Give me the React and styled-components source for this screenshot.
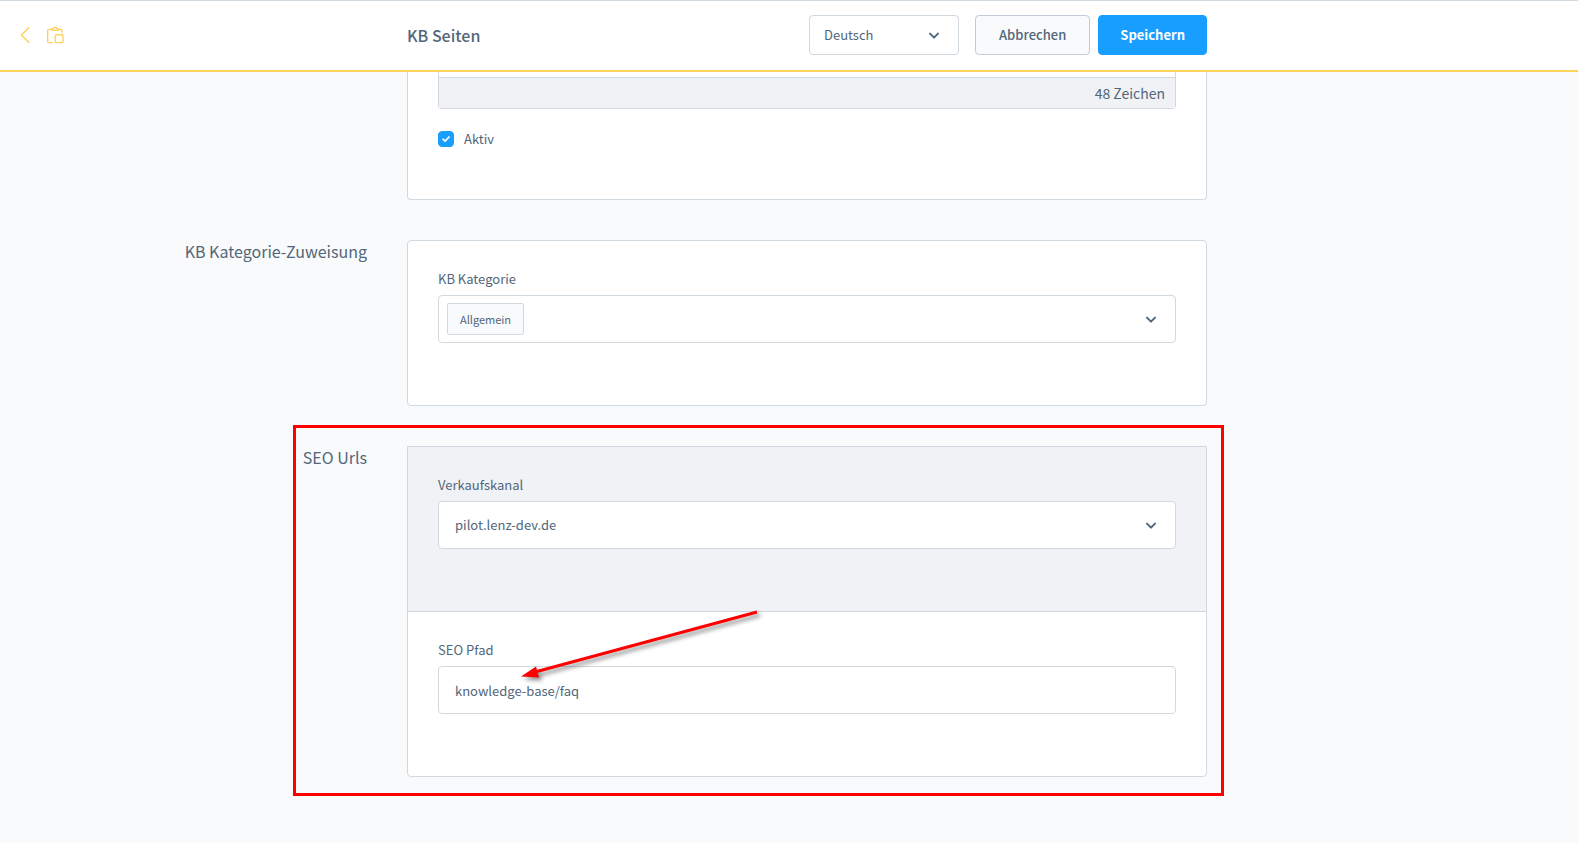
import React, { useState } from "react";
import styled, { createGlobalStyle, ThemeProvider } from "styled-components";

const theme = {
    text: "#52667a",
    border: "#d1d9e0",
    pageBg: "#f9fafb",
    mutedBg: "#f0f2f5",
    primary: "#189eff",
    accent: "#ffd15d",
    mark: "#ff0000",
};

const GlobalStyle = createGlobalStyle`
    * {
        box-sizing: border-box;
    }
    body {
        margin: 0;
        background: ${theme.pageBg};
        color: ${theme.text};
        font-family: "Source Sans Pro", "Noto Sans CJK SC", sans-serif;
        font-size: 13px;
        line-height: 16px;
    }
    button, input, select {
        font: inherit;
        color: inherit;
    }
`;

const Columns = styled.div`
    display: grid;
    grid-template-columns: 1fr minmax(0, 800px) 1fr;
    padding-left: 36px;
`;

const Header = styled.header`
    display: grid;
    grid-template-columns: 1fr minmax(0, 800px) 1fr;
    align-items: center;
    height: 72px;
    padding: 0 0 1px 36px;
    background: #fff;
    border-top: 1px solid ${(props) => props.theme.border};
    border-bottom: 2px solid ${(props) => props.theme.accent};
`;

const HeaderNav = styled.nav`
    display: flex;
    align-items: center;
    gap: 16px;
    margin-left: -16px;
    color: ${(props) => props.theme.accent};

    a {
        display: flex;
        color: inherit;
    }
`;

const HeaderContent = styled.div`
    display: flex;
    align-items: center;
    justify-content: space-between;
`;

const Title = styled.h1`
    margin: 0;
    font-size: 16px;
    font-weight: 500;
    line-height: 24px;
`;

const Actions = styled.div`
    display: flex;
    gap: 8px;
`;

const Button = styled.button`
    height: 40px;
    padding: 0 ${(props) => (props.$primary ? "21px" : "23px")};
    border: 1px solid ${(props) => (props.$primary ? props.theme.primary : "#c3ccd6")};
    border-radius: 4px;
    background: ${(props) => (props.$primary ? props.theme.primary : props.theme.pageBg)};
    color: ${(props) => (props.$primary ? "#fff" : props.theme.text)};
    font-weight: ${(props) => (props.$primary ? 700 : 500)};
    cursor: pointer;
`;

const SelectBox = styled.div`
    display: flex;
    align-items: center;
    position: relative;
    height: ${(props) => (props.$small ? "40px" : "48px")};
    width: ${(props) => (props.$small ? "150px" : "100%")};
    margin-right: ${(props) => (props.$small ? "8px" : "0")};
    padding-left: ${(props) => (props.$tags ? "8px" : "0")};
    border: 1px solid ${(props) => props.theme.border};
    border-radius: 4px;
    background: #fff;

    select {
        flex: 1;
        min-width: 0;
        height: 100%;
        padding: 0 40px 0 ${(props) => (props.$small ? "14px" : "16px")};
        border: 0;
        outline: 0;
        background: none;
        appearance: none;
    }

    svg {
        position: absolute;
        right: 18px;
        pointer-events: none;
    }
`;

const Tag = styled.span`
    height: 32px;
    padding: 0 12px;
    border: 1px solid ${(props) => props.theme.border};
    border-radius: 2px;
    background: ${(props) => props.theme.pageBg};
    font-size: 11px;
    line-height: 30px;
`;

const SectionTitle = styled.h2`
    margin: 0 40px 0 0;
    font-size: 16px;
    font-weight: 400;
    line-height: 22px;
    text-align: right;
`;

const Card = styled.div`
    position: relative;
    grid-column: 2;
    margin-bottom: 40px;
    border: 1px solid ${(props) => props.theme.border};
    border-top-width: ${(props) => (props.$continued ? "0" : "1px")};
    border-radius: ${(props) => (props.$squareTop ? "0 0 4px 4px" : "4px")};
    background: #fff;
`;

const CardSection = styled.div`
    padding: ${(props) => (props.$continued ? "0 30px 30px" : "30px")};
    background: ${(props) => (props.$muted ? props.theme.mutedBg : "none")};
    border-bottom: ${(props) =>
        props.$muted ? `1px solid ${props.theme.border}` : "0"};
`;

const Field = styled.div`
    margin-bottom: 32px;

    label {
        display: block;
        margin-bottom: 8px;
    }
`;

const TextInput = styled.input`
    display: block;
    width: 100%;
    height: 48px;
    padding: 0 16px;
    border: 1px solid ${(props) => props.theme.border};
    border-radius: 4px;
    background: #fff;
    outline: 0;
`;

const Editor = styled.div`
    padding-top: 5px;
    border: 1px solid ${(props) => props.theme.border};
    border-top: 0;
    border-radius: 0 0 4px 4px;
`;

const EditorFooter = styled.div`
    height: 31px;
    padding-right: 10px;
    border-top: 1px solid ${(props) => props.theme.border};
    background: ${(props) => props.theme.mutedBg};
    font-size: 14px;
    line-height: 30px;
    text-align: right;
`;

const CheckboxRow = styled.label`
    display: flex;
    align-items: center;
    gap: 10px;
    margin: 22px 0;
`;

const CheckboxBox = styled.span`
    display: grid;
    width: 16px;
    height: 16px;

    input,
    svg {
        grid-area: 1 / 1;
        margin: 0;
    }

    input {
        width: 16px;
        height: 16px;
        border: 1px solid ${(props) => props.theme.border};
        border-radius: 4px;
        appearance: none;
    }

    input:checked {
        border-color: ${(props) => props.theme.primary};
        background: ${(props) => props.theme.primary};
    }

    svg {
        place-self: center;
        pointer-events: none;
    }
`;

/* red frame drawn over the SEO card and its title */
const Highlight = styled.div`
    position: absolute;
    top: -22px;
    right: -18px;
    bottom: -20px;
    left: -115px;
    border: 3px solid ${(props) => props.theme.mark};
    pointer-events: none;
`;

const Arrow = styled.svg`
    position: absolute;
    top: 155px;
    left: 103px;
    overflow: visible;
    pointer-events: none;
    filter: drop-shadow(3px 3px 2px rgba(0, 0, 0, 0.45));
`;

const Chevron = () => (
    <svg width="12" height="8" viewBox="0 0 12 8" fill="none">
        <path
            d="M2 2.6L6 6.6L10 2.6"
            stroke="currentColor"
            strokeWidth="2"
            strokeLinecap="round"
            strokeLinejoin="round"
        />
    </svg>
);

const BackIcon = () => (
    <svg width="10" height="18" viewBox="0 0 10 18" fill="none">
        <path
            d="M9 1.5L1.5 9L9 16.5"
            stroke="currentColor"
            strokeWidth="1.5"
            strokeLinecap="round"
            strokeLinejoin="round"
        />
    </svg>
);

const ModuleIcon = () => (
    <svg
        width="18"
        height="18"
        viewBox="0 0 18 18"
        fill="none"
        stroke="currentColor"
        strokeWidth="1.4"
        strokeLinecap="round"
        strokeLinejoin="round"
    >
        <path d="M6.4 16.6H2.8C2.1 16.6 1.6 16.1 1.6 15.4V4.6C1.6 3.9 2.1 3.4 2.8 3.4H4.6" />
        <path d="M13.4 3.4H14.8C15.5 3.4 16 3.9 16 4.6V6.2" />
        <path d="M5.8 2.6V4.4H12.4V2.6H10.8C10.6 1.6 10 1.2 9.1 1.2S7.6 1.6 7.4 2.6Z" />
        <rect x="9.2" y="8.8" width="7.8" height="7.8" rx="1.3" />
    </svg>
);

const CheckIcon = () => (
    <svg width="8" height="8" viewBox="0 0 8 8" fill="none">
        <path
            d="M1 4.2L3.1 6.1L7 2"
            stroke="#fff"
            strokeWidth="1.7"
            strokeLinecap="round"
            strokeLinejoin="round"
        />
    </svg>
);

const App = () => {
    const [active, setActive] = useState(true);
    const [path, setPath] = useState("knowledge-base/faq");

    return (
        <ThemeProvider theme={theme}>
            <GlobalStyle />
            <Header>
                <HeaderNav>
                    <a href="#back" aria-label="Zurück">
                        <BackIcon />
                    </a>
                    <a href="#module" aria-label="KB Seiten">
                        <ModuleIcon />
                    </a>
                </HeaderNav>
                <HeaderContent>
                    <Title>KB Seiten</Title>
                    <Actions>
                        <SelectBox $small>
                            <select aria-label="Sprache">
                                <option>Deutsch</option>
                            </select>
                            <Chevron />
                        </SelectBox>
                        <Button type="button">Abbrechen</Button>
                        <Button type="button" $primary>
                            Speichern
                        </Button>
                    </Actions>
                </HeaderContent>
            </Header>

            <main>
                <Columns>
                    <Card $continued $squareTop>
                        <CardSection $continued>
                            <Editor>
                                <EditorFooter>48 Zeichen</EditorFooter>
                            </Editor>
                            <CheckboxRow>
                                <CheckboxBox>
                                    <input
                                        type="checkbox"
                                        checked={active}
                                        onChange={(e) => setActive(e.target.checked)}
                                    />
                                    <CheckIcon />
                                </CheckboxBox>
                                Aktiv
                            </CheckboxRow>
                        </CardSection>
                    </Card>
                </Columns>

                <Columns>
                    <SectionTitle>KB Kategorie-Zuweisung</SectionTitle>
                    <Card>
                        <CardSection>
                            <Field>
                                <label htmlFor="category">KB Kategorie</label>
                                <SelectBox $tags>
                                    <Tag>Allgemein</Tag>
                                    <select id="category">
                                        <option></option>
                                    </select>
                                    <Chevron />
                                </SelectBox>
                            </Field>
                        </CardSection>
                    </Card>
                </Columns>

                <Columns>
                    <SectionTitle>SEO Urls</SectionTitle>
                    <Card $squareTop>
                        <CardSection $muted>
                            <Field>
                                <label htmlFor="channel">Verkaufskanal</label>
                                <SelectBox>
                                    <select id="channel">
                                        <option>pilot.lenz-dev.de</option>
                                    </select>
                                    <Chevron />
                                </SelectBox>
                            </Field>
                        </CardSection>
                        <CardSection>
                            <Field>
                                <label htmlFor="path">SEO Pfad</label>
                                <TextInput
                                    id="path"
                                    value={path}
                                    onChange={(e) => setPath(e.target.value)}
                                />
                            </Field>
                        </CardSection>
                        <Highlight />
                        <Arrow width="250" height="80" viewBox="0 0 250 80">
                            <path d="M246 10L24 70" stroke="#ff0000" strokeWidth="3" />
                            <path d="M10 74.5L25 64.5L28 75.5Z" fill="#ff0000" />
                        </Arrow>
                    </Card>
                </Columns>
            </main>
        </ThemeProvider>
    );
};

export default App;
